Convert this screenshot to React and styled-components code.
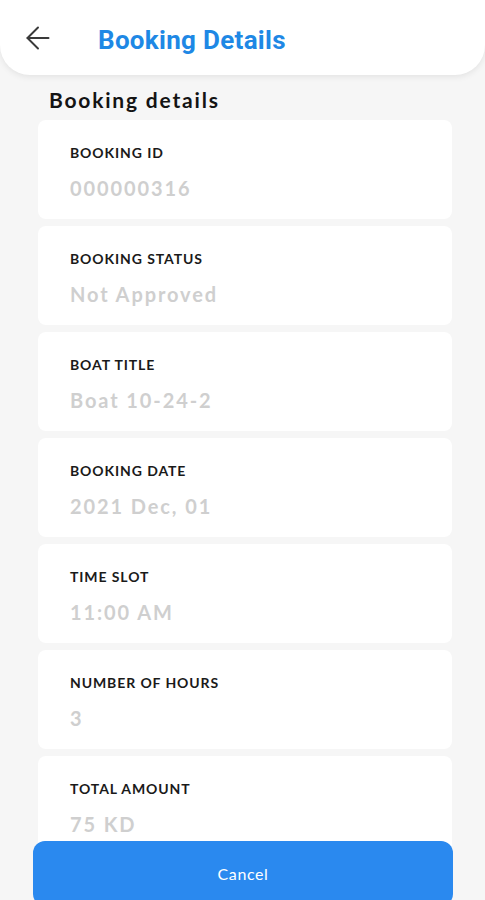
import React from 'react';
import styled, { createGlobalStyle } from 'styled-components';
import { ArrowLeft } from 'lucide-react';

const GlobalStyle = createGlobalStyle`
  html, body {
    margin: 0;
    padding: 0;
    background: #f6f6f6;
  }
  * {
    box-sizing: border-box;
  }
`;

const Screen = styled.div`
  position: relative;
  width: 485px;
  height: 900px;
  overflow: hidden;
  background: #f6f6f6;
  font-family: Lato, 'Noto Sans', sans-serif;
`;

const Header = styled.header`
  height: 75px;
  background: #fff;
  border-radius: 0 0 30px 30px;
  box-shadow: 0 2px 6px rgba(0, 0, 0, 0.08);
  display: flex;
  align-items: center;
  padding: 0 0 0 20px;
`;

const BackButton = styled.button`
  border: none;
  background: none;
  padding: 0;
  width: 36px;
  height: 36px;
  color: #3a3a3a;
  display: flex;
`;

const Title = styled.h1`
  margin: 4px 0 0 42px;
  font-family: Roboto, sans-serif;
  font-size: 26px;
  font-weight: 700;
  letter-spacing: 0.3px;
  color: #1e88e5;
`;

const Content = styled.div`
  padding: 13px 33px 0 38px;
`;

const SectionTitle = styled.h2`
  margin: 0 0 8px 11px;
  font-size: 21px;
  font-weight: 700;
  line-height: 24px;
  color: #141414;
  letter-spacing: 1.8px;
`;

const Cards = styled.div`
  display: flex;
  flex-direction: column;
  gap: 7px;
`;

const Card = styled.div`
  height: 99px;
  background: #fff;
  border-radius: 8px;
  padding: 25px 32px 0;
`;

const Label = styled.div`
  font-size: 14px;
  font-weight: 700;
  line-height: 16px;
  letter-spacing: 0.9px;
  color: #1a1a1a;
  text-transform: uppercase;
`;

const Value = styled.div`
  margin-top: 14px;
  font-size: 20px;
  font-weight: 700;
  line-height: 26px;
  color: #cfcfcf;
  letter-spacing: 1.9px;
`;

const Footer = styled.div`
  position: absolute;
  left: 33px;
  right: 32px;
  bottom: -6px;
`;

const CancelButton = styled.button`
  width: 100%;
  height: 65px;
  border: none;
  border-radius: 12px;
  background: #2a89ef;
  color: #fff;
  font-family: Lato, sans-serif;
  font-size: 16px;
  letter-spacing: 0.6px;
  padding-bottom: 2px;
`;

const details = [
  { label: 'Booking ID', value: '000000316' },
  { label: 'Booking Status', value: 'Not Approved' },
  { label: 'Boat Title', value: 'Boat 10-24-2' },
  { label: 'Booking Date', value: '2021 Dec, 01' },
  { label: 'Time Slot', value: '11:00 AM' },
  { label: 'Number of Hours', value: '3' },
  { label: 'Total Amount', value: '75 KD' },
];

const App = () => (
  <>
    <GlobalStyle />
    <Screen>
      <Header>
        <BackButton aria-label='Back'>
          <ArrowLeft size={36} strokeWidth={1.3} />
        </BackButton>
        <Title>Booking Details</Title>
      </Header>
      <Content>
        <SectionTitle>Booking details</SectionTitle>
        <Cards>
          {details.map(({ label, value }) => (
            <Card key={label}>
              <Label>{label}</Label>
              <Value>{value}</Value>
            </Card>
          ))}
        </Cards>
      </Content>
      <Footer>
        <CancelButton>Cancel</CancelButton>
      </Footer>
    </Screen>
  </>
);

export default App;
